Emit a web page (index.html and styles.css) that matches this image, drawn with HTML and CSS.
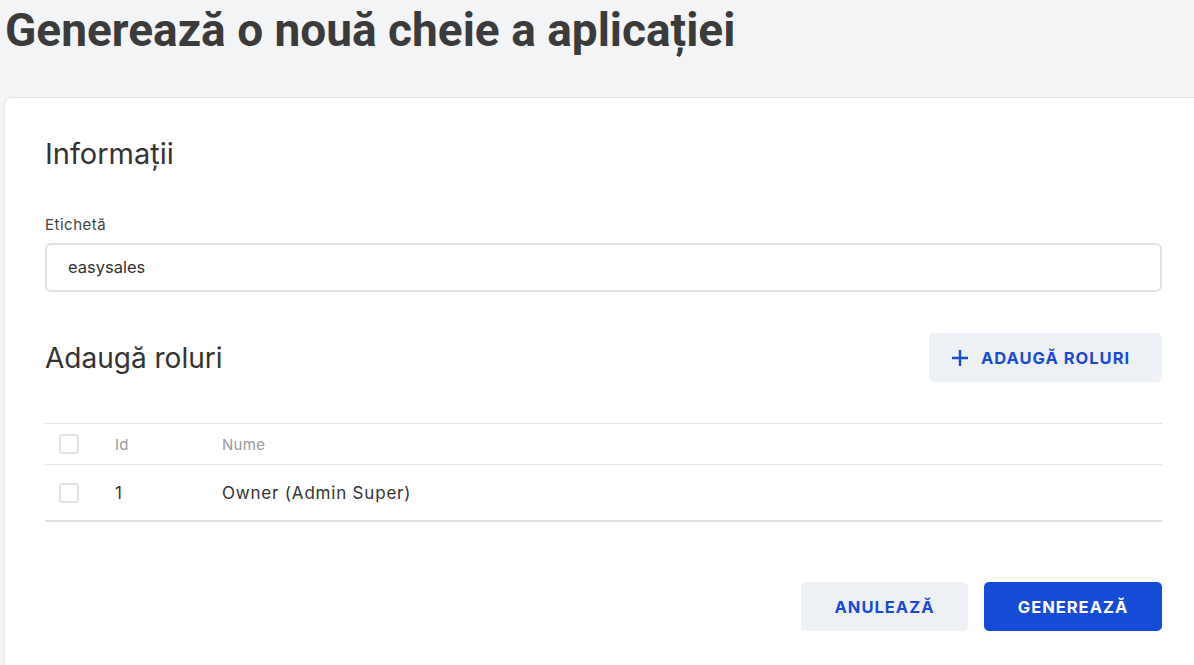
FILE: index.html
```html
<!DOCTYPE html>
<html lang="ro">
<head>
<meta charset="utf-8">
<link rel="stylesheet" href="styles.css">
</head>
<body>
<div class="page">
  <h1 class="title">Generează o nouă cheie a aplicației</h1>
  <div class="card">
    <h2 class="section-title">Informații</h2>
    <label class="field-label">Etichetă</label>
    <div class="input">easysales</div>
    <div class="roles-head">
      <h2 class="section-title roles-title">Adaugă roluri</h2>
      <button class="btn btn-light btn-add">
        <svg width="18" height="18" viewBox="0 0 18 18"><path d="M9 1v16M1 9h16" stroke="#1a4bd6" stroke-width="2.4" fill="none"/></svg>
        <span>ADAUGĂ ROLURI</span>
      </button>
    </div>
    <div class="table">
      <div class="row head">
        <div class="cell cb"><span class="box"></span></div>
        <div class="cell id">Id</div>
        <div class="cell name">Nume</div>
      </div>
      <div class="row body-row">
        <div class="cell cb"><span class="box"></span></div>
        <div class="cell id">1</div>
        <div class="cell name">Owner (Admin Super)</div>
      </div>
    </div>
    <div class="actions">
      <button class="btn btn-light btn-cancel">ANULEAZĂ</button>
      <button class="btn btn-primary btn-gen">GENEREAZĂ</button>
    </div>
  </div>
</div>
</body>
</html>
```

FILE: styles.css
```css
* { box-sizing: border-box; }
html, body { margin: 0; padding: 0; }
body {
  background: #f3f4f6;
  font-family: "Inter", "Noto Sans", sans-serif;
  color: #333;
  overflow: hidden;
}
.page {
  padding: 0 0 0 4px;
}
.title {
  margin: 0;
  padding: 4px 0 0 1px;
  height: 97px;
  font-family: "Roboto", sans-serif;
  font-weight: 700;
  font-size: 46px;
  line-height: 52px;
  color: #3b3b3b;
}
.card {
  background: #fff;
  border: 1px solid #e4e5e7;
  border-radius: 8px;
  margin-right: -10px;
  padding: 38px 41px 40px 40px;
  height: 600px;
}
.section-title {
  margin: 0;
  font-weight: 400;
  font-size: 29px;
  line-height: 36px;
  color: #333;
}
.field-label {
  display: block;
  margin-top: 43px;
  font-size: 15px;
  line-height: 20px;
  letter-spacing: 0.5px;
  color: #444;
}
.input {
  margin-top: 8px;
  height: 49px;
  border: 2px solid #e2e2e2;
  border-radius: 6px;
  padding: 0 0 0 21px;
  font-size: 16.5px;
  line-height: 45px;
  color: #333;
}
.roles-head {
  display: flex;
  justify-content: space-between;
  align-items: center;
  margin-top: 41px;
}
.roles-title { font-size: 28px; }
.btn {
  border: none;
  border-radius: 5px;
  font-family: "Inter", "Noto Sans", sans-serif;
  font-weight: 700;
  font-size: 16.5px;
  height: 49px;
  cursor: pointer;
  letter-spacing: 1px;
}
.btn-light { background: #edf1f6; color: #1a4bd6; }
.btn-primary { background: #154bd7; color: #fff; }
.btn-add {
  display: flex;
  align-items: center;
  gap: 12px;
  width: 233px;
  padding: 0 0 0 22px;
}
.table {
  margin-top: 41px;
  border-top: 1px solid #e3e3e3;
  border-bottom: 2px solid #e0e0e0;
}
.row {
  display: flex;
  align-items: center;
}
.row.head {
  height: 41px;
  border-bottom: 1px solid #e6e6e6;
  color: #9a9a9a;
  font-size: 15px;
  letter-spacing: 0.3px;
}
.row.body-row {
  height: 55px;
  font-size: 17px;
  letter-spacing: 0.8px;
  color: #333;
}
.cell.cb { width: 70px; padding-left: 14px; display: flex; }
.box {
  width: 20px;
  height: 20px;
  border: 2px solid #e3e3e3;
  border-radius: 3px;
  display: inline-block;
}
.cell.id { width: 107px; }
.cell.name { flex: 1; }
.actions {
  display: flex;
  justify-content: flex-end;
  gap: 16px;
  margin-top: 60px;
}
.btn-cancel { width: 167px; }
.btn-gen { width: 178px; }
```
